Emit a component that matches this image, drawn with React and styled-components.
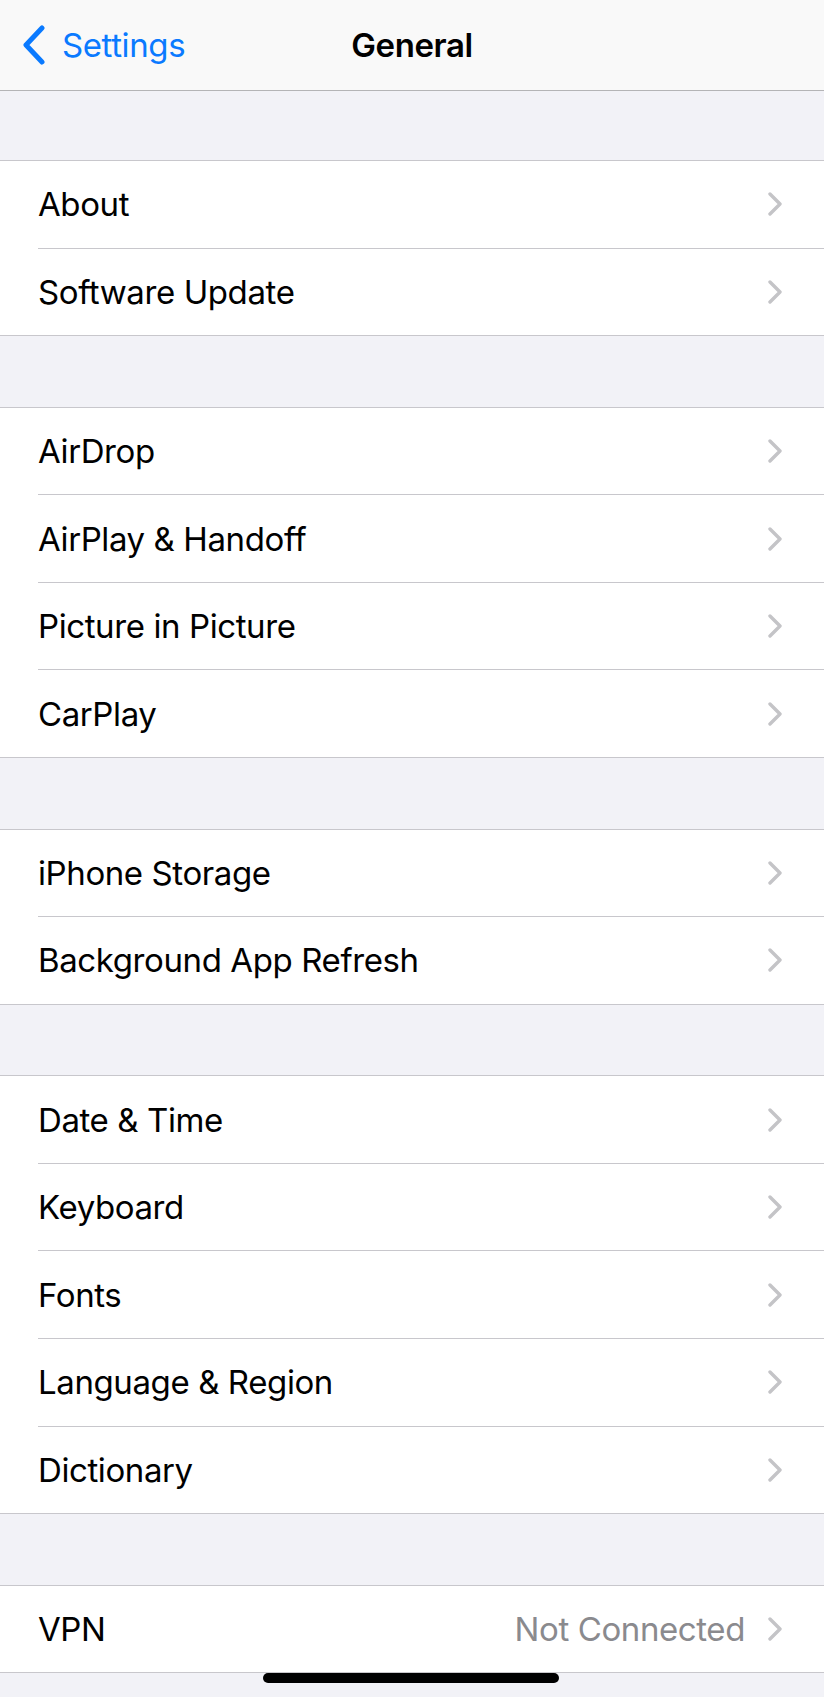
import styled, { createGlobalStyle } from 'styled-components'

const GlobalStyle = createGlobalStyle`
    html, body {
        margin: 0;
        padding: 0;
        background: #f2f2f7;
    }
    body {
        font-family: Inter, "Noto Sans", "Liberation Sans", sans-serif;
        -webkit-font-smoothing: antialiased;
    }
`

const Page = styled.div`
    position: relative;
    width: 824px;
    min-height: 1697px;
    background: #f2f2f7;
    overflow: hidden;
`

const NavBar = styled.div`
    position: relative;
    height: 90px;
    display: flex;
    align-items: center;
    justify-content: center;
    background: #f9f9f9;
    border-bottom: 1px solid #b4b4b6;
`

const BackButton = styled.div`
    position: absolute;
    left: 22px;
    top: 0;
    bottom: 0;
    display: flex;
    align-items: center;
    gap: 16px;
    color: #0a7aff;
    font-size: 33px;
    letter-spacing: -0.4px;
`

const NavTitle = styled.div`
    font-size: 33px;
    font-weight: 600;
    letter-spacing: -0.4px;
    color: #000;
`

const Sections = styled.div`
    display: flex;
    flex-direction: column;
    gap: 70.5px;
    padding-top: 69px;
`

const Group = styled.div`
    background: #fff;
    border-top: 1px solid #c8c7cc;
    border-bottom: 1px solid #c8c7cc;
`

const Row = styled.div`
    position: relative;
    height: 86.6px;
    display: flex;
    align-items: center;
    padding: 0 41px 0 38px;

    & + & {
        border-top: 1px solid transparent;
    }

    & + &::before {
        content: '';
        position: absolute;
        top: -1px;
        left: 38px;
        right: 0;
        height: 1px;
        background: #c8c7cc;
    }
`

const Label = styled.div`
    flex: 1;
    font-size: 33px;
    letter-spacing: -0.4px;
    color: #000;
`

const Detail = styled.div`
    font-size: 33px;
    letter-spacing: -0.4px;
    color: #8a8a8e;
    margin-right: 22px;
`

const HomeIndicator = styled.div`
    position: absolute;
    left: 263px;
    top: 1673px;
    width: 296px;
    height: 10px;
    border-radius: 5px;
    background: #000;
`

function Chevron() {
    return (
        <svg width='16' height='24' viewBox='0 0 16 24'>
            <path d='M3 2 L13 12 L3 22' fill='none' stroke='#c4c4c7' strokeWidth='3.4' strokeLinecap='round' strokeLinejoin='round' />
        </svg>
    )
}

function BackChevron() {
    return (
        <svg width='24' height='40' viewBox='0 0 24 40'>
            <path d='M20 3 L4 20 L20 37' fill='none' stroke='#0a7aff' strokeWidth='5' strokeLinecap='round' strokeLinejoin='round' />
        </svg>
    )
}

const groups = [
    [{ label: 'About' }, { label: 'Software Update' }],
    [{ label: 'AirDrop' }, { label: 'AirPlay & Handoff' }, { label: 'Picture in Picture' }, { label: 'CarPlay' }],
    [{ label: 'iPhone Storage' }, { label: 'Background App Refresh' }],
    [{ label: 'Date & Time' }, { label: 'Keyboard' }, { label: 'Fonts' }, { label: 'Language & Region' }, { label: 'Dictionary' }],
    [{ label: 'VPN', detail: 'Not Connected' }],
]

export default function App() {
    return (
        <Page>
            <GlobalStyle />
            <NavBar>
                <BackButton>
                    <BackChevron />
                    <span>Settings</span>
                </BackButton>
                <NavTitle>General</NavTitle>
            </NavBar>
            <Sections>
                {groups.map((rows, i) => (
                    <Group key={i}>
                        {rows.map((row) => (
                            <Row key={row.label}>
                                <Label>{row.label}</Label>
                                {row.detail && <Detail>{row.detail}</Detail>}
                                <Chevron />
                            </Row>
                        ))}
                    </Group>
                ))}
            </Sections>
            <HomeIndicator />
        </Page>
    )
}
